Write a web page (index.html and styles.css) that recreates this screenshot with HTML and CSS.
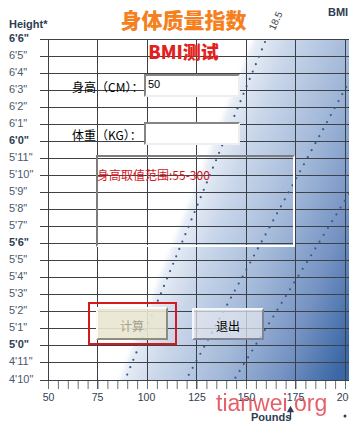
FILE: index.html
```html
<!DOCTYPE html>
<html lang="zh-CN">
<head>
<meta charset="utf-8">
<title>身体质量指数</title>
<link rel="stylesheet" href="styles.css">
</head>
<body>
<div class="stage">
  <svg class="chart" width="349" height="428" viewBox="0 0 349 428" xmlns="http://www.w3.org/2000/svg">
    <defs>
      <linearGradient id="bmiFill" gradientUnits="userSpaceOnUse" x1="190" y1="210" x2="374" y2="283">
        <stop offset="0" stop-color="#e6ecf5"/>
        <stop offset="0.15" stop-color="#cad7ea"/>
        <stop offset="0.45" stop-color="#a3b9d9"/>
        <stop offset="0.75" stop-color="#7391c2"/>
        <stop offset="1" stop-color="#3a67a5"/>
      </linearGradient>
      <filter id="soft" x="-10%" y="-10%" width="120%" height="120%">
        <feGaussianBlur stdDeviation="2.5"/>
      </filter>
      <clipPath id="plot"><rect x="40" y="39" width="309" height="341.5"/></clipPath>
    </defs>
    <rect class="paper" width="349" height="428"/>
    <g clip-path="url(#plot)">
      <polygon points="262,20 380,20 380,400 112,400" fill="url(#bmiFill)" filter="url(#soft)"/>
    </g>
    <path class="grid-h" d="M40 39.5H349M40 56.5H349M40 73.5H349M40 90.5H349M40 107.5H349M40 124.5H349M40 141.5H349M40 158.5H349M40 175.5H349M40 192.5H349M40 209.5H349M40 226.5H349M40 243.5H349M40 260.5H349M40 277.5H349M40 294.5H349M40 311.5H349M40 328.5H349M40 345.5H349M40 362.5H349M40 380.5H349"/>
    <path class="grid-v" d="M48.5 39V389M97.5 39V389M147.5 39V389M196.5 39V389M246.5 39V389M295.5 39V389M345.5 39V389"/>
    <line class="ticks" x1="48" y1="385" x2="349" y2="385"/>
    <line class="dots" x1="265" y1="42" x2="125" y2="380"/>
    <line class="dots" x1="350" y1="80" x2="186" y2="380"/>
    <line class="dots" x1="349" y1="194" x2="234" y2="380"/>

    <text class="axis-title" x="9" y="28">Height*</text>
    <text class="axis-title" x="328" y="16">BMI</text>
    <text class="bmi-tag" x="276" y="24" transform="rotate(-66 276 21)" text-anchor="middle">18.5</text>

    <g class="h-labels">
      <text class="major" x="9" y="42">6'6"</text>
      <text x="9" y="59">6'5"</text>
      <text x="9" y="76">6'4"</text>
      <text x="9" y="93">6'3"</text>
      <text x="9" y="110">6'2"</text>
      <text x="9" y="127">6'1"</text>
      <text class="major" x="9" y="144">6'0"</text>
      <text x="9" y="161">5'11"</text>
      <text x="9" y="178">5'10"</text>
      <text x="9" y="195">5'9"</text>
      <text x="9" y="212">5'8"</text>
      <text x="9" y="229">5'7"</text>
      <text class="major" x="9" y="246">5'6"</text>
      <text x="9" y="263">5'5"</text>
      <text x="9" y="280">5'4"</text>
      <text x="9" y="297">5'3"</text>
      <text x="9" y="314">5'2"</text>
      <text x="9" y="331">5'1"</text>
      <text class="major" x="9" y="348">5'0"</text>
      <text x="9" y="365">4'11"</text>
      <text x="9" y="383">4'10"</text>
    </g>

    <g class="w-labels" text-anchor="middle">
      <text x="48.5" y="401">50</text>
      <text x="97.5" y="401">75</text>
      <text x="146.5" y="401">100</text>
      <text x="197" y="401">125</text>
      <text x="246.5" y="401">150</text>
      <text x="295.5" y="401">175</text>
      <text x="345.5" y="401">200</text>
    </g>

    <text class="watermark" x="216" y="411">tianwei.org</text>
    <text class="axis-title" x="251" y="421">Pounds</text>
    <path class="arrow" d="M290.5 419V409M288 411.5L290.5 407L293 411.5Z"/>
    <circle class="corner-dot" cx="345" cy="416" r="1.5"/>
  </svg>

  <form class="panel">
    <div class="titles">
      <h1 class="title">身体质量指数</h1>
      <div class="subtitle">BMI测试</div>
    </div>
    <label class="field field-height">
      <span class="field-label">身高（CM）：</span>
      <input class="field-input" type="text" value="50" autofocus>
    </label>
    <label class="field field-weight">
      <span class="field-label">体重（KG）：</span>
      <input class="field-input" type="text">
    </label>
    <div class="range">
      <p class="range-text">身高取值范围:55-300</p>
    </div>
    <div class="actions">
      <span class="focus-ring"><button type="button" class="btn btn-calc" disabled>计算</button></span>
      <button type="button" class="btn btn-exit">退出</button>
    </div>
  </form>
</div>
</body>
</html>
```

FILE: styles.css
```css
html, body {
  margin: 0;
  padding: 0;
  background: #fff;
}

.stage {
  position: relative;
  width: 349px;
  height: 428px;
  overflow: hidden;
  font-family: "Noto Sans CJK SC", "Liberation Sans", sans-serif;
}

/* chart canvas */
.chart {
  position: absolute;
  left: 0;
  top: 0;
  display: block;
}

.paper { fill: #fff; }

.grid-h {
  stroke: #3d4249;
  stroke-width: 1;
  fill: none;
}

.grid-v {
  stroke: #3a3f48;
  stroke-width: 1;
  fill: none;
}

.ticks {
  stroke: #6a6f77;
  stroke-width: 8;
  stroke-dasharray: 1 8.9;
}

.dots {
  stroke: #3b5a8c;
  stroke-width: 2.2;
  stroke-linecap: round;
  stroke-dasharray: 0 8;
}

.axis-title {
  font-family: "Liberation Sans", Arial, sans-serif;
  font-size: 11px;
  font-weight: bold;
  fill: #2e3d52;
}

.bmi-tag {
  font-family: "Liberation Sans", Arial, sans-serif;
  font-size: 10px;
  fill: #3a3d44;
}

.h-labels text {
  font-family: "Liberation Sans", Arial, sans-serif;
  font-size: 11px;
  fill: #4a596c;
}

.h-labels .major {
  font-weight: bold;
  fill: #2e3d52;
}

.w-labels text {
  font-family: "Liberation Sans", Arial, sans-serif;
  font-size: 10.5px;
  fill: #2e3d52;
}

.watermark {
  font-family: "Liberation Sans", Arial, sans-serif;
  font-size: 23px;
  fill: #e2434d;
  opacity: 0.85;
}

.arrow {
  stroke: #2e3d52;
  stroke-width: 1.3;
  fill: #2e3d52;
}

.corner-dot { fill: #2e3d52; }

/* form overlay */
.panel {
  position: absolute;
  inset: 0;
  margin: 0;
  display: flex;
  flex-direction: column;
  align-items: flex-start;
}

.titles {
  align-self: stretch;
  padding: 9px 0 0 18px;
  text-align: center;
}

.title {
  margin: 0;
  font-size: 21px;
  line-height: 21px;
  font-weight: 900;
  color: #f4801e;
}

.subtitle {
  margin-top: 12px;
  font-size: 18px;
  line-height: 18px;
  font-weight: 900;
  color: #e3211c;
}

.field {
  display: flex;
  align-items: center;
  margin-left: 72px;
}

.field-height { margin-top: 14px; }
.field-weight { margin-top: 25px; }

.field-label {
  width: 72px;
  font-size: 12px;
  line-height: 14px;
  color: #000;
  white-space: nowrap;
  padding-top: 2px;
}

.field-input {
  box-sizing: border-box;
  width: 96px;
  height: 23px;
  margin: 0;
  padding: 0 2px 4px;
  border: 2px solid;
  border-color: #858585 #eeeeee #eeeeee #858585;
  background: #fff;
  font-family: "Liberation Sans", Arial, sans-serif;
  font-size: 11px;
  color: #000;
  caret-color: #000;
  outline: none;
}

.range {
  box-sizing: border-box;
  width: 199px;
  height: 92px;
  margin: 10px 0 0 96px;
  border: 2px solid;
  border-color: #7d7d7d #ffffff #ffffff #7d7d7d;
}

.range-text {
  margin: 0 0 0 -1px;
  padding-top: 11px;
  font-size: 12px;
  line-height: 14px;
  color: #d4141a;
  white-space: nowrap;
}

.actions {
  display: flex;
  align-items: flex-start;
  margin: 55px 0 0 88px;
}

.focus-ring {
  display: block;
  border: 2px solid #d5191c;
  padding: 3px 7px 3px 6px;
}

.btn {
  box-sizing: border-box;
  display: block;
  width: 72px;
  height: 33px;
  margin: 0;
  padding: 4px 0 0;
  border: 2px solid;
  font-family: "Noto Sans CJK SC", sans-serif;
  font-size: 12px;
  line-height: 14px;
}

.btn-calc {
  background: rgba(233, 229, 210, 0.9);
  border-color: #fbfaf4 #8f8c7c #8f8c7c #fbfaf4;
  color: #a5a18c;
}

.btn-exit {
  margin: 6px 0 0 15px;
  height: 32px;
  background: rgba(228, 231, 238, 0.72);
  border-color: #f4f6fa #7f8594 #7f8594 #f4f6fa;
  color: #000;
}
```
